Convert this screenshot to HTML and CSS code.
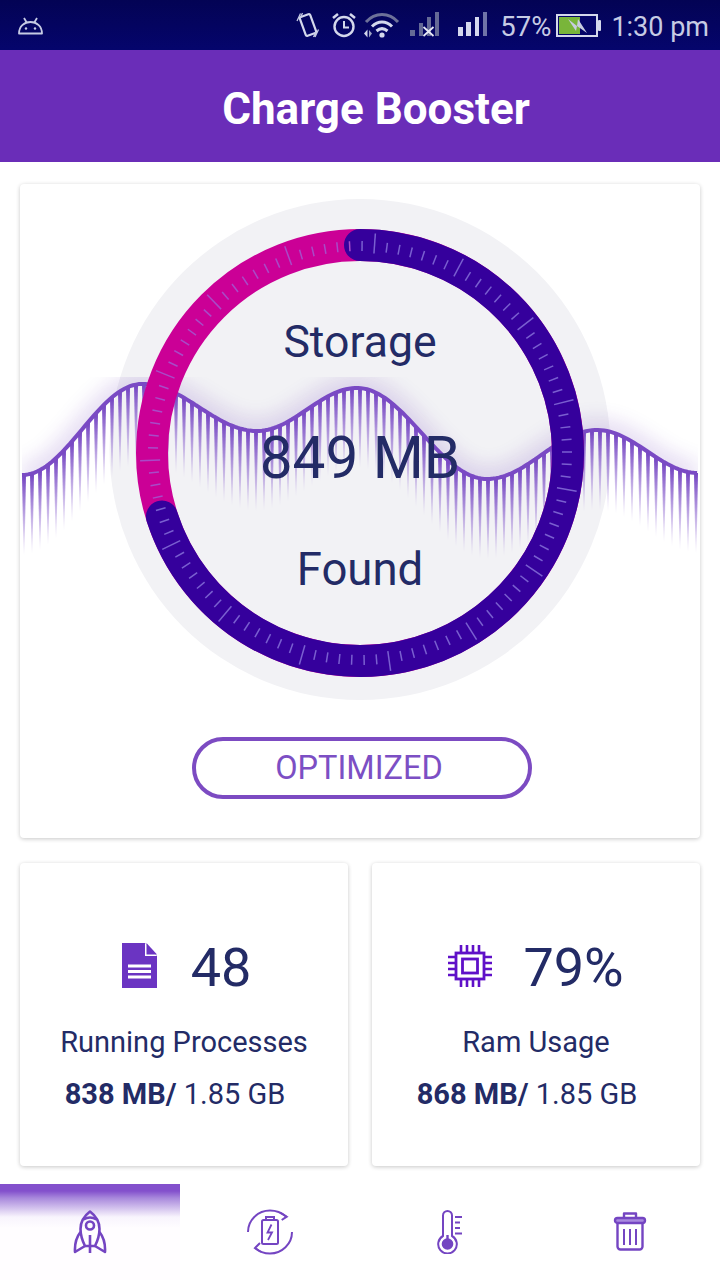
FILE: index.html
```html
<!DOCTYPE html>
<html lang="en">
<head>
<meta charset="utf-8">
<title>Charge Booster</title>
<link rel="stylesheet" href="styles.css">
</head>
<body>
<div class="screen">
  <div class="statusbar">
    <svg class="sb-android" viewBox="0 0 27 18" width="27" height="18"><path d="M2 16.500C2 9.500 7 5 13.500 5S25 9.500 25 16.500Z" fill="none" stroke="#c6cbe4" stroke-width="1.800" stroke-linejoin="round"/><path d="M7 1l3 5M20 1l-3 5" stroke="#c6cbe4" stroke-width="1.800" fill="none"/><circle cx="9" cy="11.500" r="1.200" fill="#c6cbe4"/><circle cx="18" cy="11.500" r="1.200" fill="#c6cbe4"/></svg>
    <div class="sb-right">
      <svg class="sb-vib" viewBox="0 0 24 26" width="24" height="26"><rect x="6.500" y="3" width="11" height="20" rx="1.500" transform="rotate(-20 12 13)" fill="none" stroke="#d4d8ec" stroke-width="2.200"/><path d="M4.500 1.500L1 9M6.500 1L4 6.500M19 25l3.500-7.500M17.500 25l2.500-5" stroke="#c6cbe4" stroke-width="1.300" fill="none"/></svg>
      <svg class="sb-alarm" viewBox="0 0 26 26" width="26" height="26"><circle cx="13" cy="14.500" r="9.500" fill="none" stroke="#d4d8ec" stroke-width="2.400"/><path d="M13 9v6.500h5" fill="none" stroke="#d4d8ec" stroke-width="2"/><path d="M2 6l5-4M24 6l-5-4" stroke="#d4d8ec" stroke-width="2.600" fill="none"/></svg>
      <svg class="sb-wifi" viewBox="0 0 36 26" width="36" height="26"><path d="M2 10C11 0 25 0 34 10" fill="none" stroke="#6d7199" stroke-width="3"/><path d="M8 14.500C14 8.500 22 8.500 28 14.500" fill="none" stroke="#d4d8ec" stroke-width="3"/><path d="M12.500 19C16 16 20 16 23.500 19" fill="none" stroke="#d4d8ec" stroke-width="3"/><circle cx="18" cy="23" r="2.600" fill="#d4d8ec"/><path d="M0 21.500l3.500-4v8Z" fill="#d4d8ec"/><path d="M5 18l3 3.500-3 4Z" fill="#9ea3c4"/></svg>
      <svg class="sb-sigx" viewBox="0 0 29 26" width="29" height="26"><rect x="0" y="18" width="5" height="6" fill="#656a96"/><rect x="9" y="11" width="4" height="13" fill="#656a96"/><rect x="17" y="5" width="4" height="19" fill="#656a96"/><rect x="25" y="0" width="4" height="24" fill="#656a96"/><path d="M13.500 15l10 9M23.500 15l-10 9" stroke="#e6e8f4" stroke-width="1.800"/></svg>
      <svg class="sb-sig" viewBox="0 0 29 26" width="29" height="26"><rect x="0" y="15" width="5" height="9" fill="#d5d8ee"/><rect x="8" y="10" width="5" height="14" fill="#d5d8ee"/><rect x="17" y="5" width="4" height="19" fill="#d5d8ee"/><rect x="25" y="0" width="4" height="24" fill="#6f74a8"/></svg>
      <span class="sb-pct">57%</span>
      <svg class="sb-batt" viewBox="0 0 45 23" width="45" height="23"><rect x="1" y="1" width="40" height="21" fill="#050568" stroke="#d4d8ec" stroke-width="2"/><rect x="3" y="3" width="21" height="17" fill="#79b53a"/><rect x="42" y="6" width="3" height="11" rx="1" fill="#d4d8ec"/><path d="M12 5l9 7 1-7 9 14-10-7-1 5Z" fill="#c8cce0"/></svg>
      <span class="sb-time">1:30 pm</span>
    </div>
  </div>

  <header class="appbar"><h1>Charge Booster</h1></header>

  <main class="content">
    <section class="card hero">
      <div class="gauge">
        <svg class="gauge-art" id="gauge" viewBox="20 184 680 520" width="680" height="520"></svg>
        <div class="gauge-text">
          <div class="g-storage">Storage</div>
          <div class="g-value">849 MB</div>
          <div class="g-found">Found</div>
        </div>
      </div>
      <div class="pill">OPTIMIZED</div>
    </section>

    <div class="stats">
      <section class="card stat">
        <div class="stat-top stat-top-doc">
          <svg class="stat-ico" viewBox="0 0 35 45" width="35" height="45"><path d="M0 0H23L35 13V45H0Z" fill="#6b34c2"/><path d="M23 0V13H35Z" fill="#fff"/><path d="M24.500 0L35 11.500H24.500Z" fill="#6b34c2"/><path d="M6 23H29M6 28.500H29M6 34H29" stroke="#fff" stroke-width="2.800"/></svg>
          <span class="stat-num">48</span>
        </div>
        <div class="stat-label">Running Processes</div>
        <div class="stat-mem"><b>838 MB/</b> 1.85 GB</div>
      </section>
      <section class="card stat">
        <div class="stat-top stat-top-chip">
          <svg class="stat-ico" viewBox="0 0 44 44" width="44" height="44"><rect x="8" y="9" width="28" height="26" fill="none" stroke="#5f10c8" stroke-width="2.800"/><rect x="14.500" y="15" width="15" height="14" fill="none" stroke="#5f10c8" stroke-width="2.800"/><path d="M13 1V9M19 1V9M25 1V9M31 1V9M13 35V43M19 35V43M25 35V43M31 35V43M0 13H8M0 19H8M0 25H8M0 31H8M36 13H44M36 19H44M36 25H44M36 31H44" stroke="#5f10c8" stroke-width="2.600" fill="none"/></svg>
          <span class="stat-num">79%</span>
        </div>
        <div class="stat-label">Ram Usage</div>
        <div class="stat-mem"><b>868 MB/</b> 1.85 GB</div>
      </section>
    </div>
  </main>

  <nav class="tabs">
    <div class="tab tab-active">
      <svg class="ti-rocket" viewBox="0 0 34 44" width="34" height="44" fill="none" stroke="#7445c2" stroke-width="2.600" stroke-linejoin="round"><path d="M17 1.500C11 6 7.500 12 7.500 19C7.500 25 9.500 31 12 36H22C24.500 31 26.500 25 26.500 19C26.500 12 23 6 17 1.500Z"/><path d="M10.500 9.500Q17 5.500 23.500 9.500"/><circle cx="17" cy="15.500" r="4"/><path d="M7.500 22C3.500 27 1.500 33 2 42L12 36"/><path d="M26.500 22C30.500 27 32.500 33 32 42L22 36"/><path d="M17 25V43"/></svg>
    </div>
    <div class="tab">
      <svg class="ti-batt" viewBox="0 0 46 46" width="46" height="46" fill="none" stroke="#7445c2" stroke-width="2"><path d="M1 23C1 11 11 1.500 23 1.500C29 1.500 35 4 39.500 7.700"/><path d="M33 3.700L39.700 7.700L34.700 11"/><path d="M45 23C45 35 35 44.500 23 44.500C17 44.500 12 42.500 8 39"/><path d="M13 34L8 39L14 43"/><rect x="15" y="11" width="16" height="24" rx="1.500"/><path d="M19 11V8H27V11"/><path d="M24.500 15.500L20.500 23.500H25L21 31" stroke-width="1.800"/></svg>
    </div>
    <div class="tab">
      <svg class="ti-thermo" viewBox="0 0 26 44" width="26" height="44" fill="none" stroke="#7445c2" stroke-width="2"><path d="M6 26V5.500A4.500 4.500 0 0 1 15 5.500V26A9.300 9.300 0 1 1 6 26Z"/><circle cx="10.500" cy="34" r="5.800" fill="#7445c2" stroke="none"/><path d="M10.500 25V32" stroke-width="2.400"/><path d="M18 7H25M18 12.500H23M18 18H23M18 23.500H25" stroke-width="2"/></svg>
    </div>
    <div class="tab">
      <svg class="ti-trash" viewBox="0 0 34 39" width="34" height="39" fill="none" stroke="#7445c2" stroke-width="2.400" stroke-linejoin="round"><path d="M11 6V1.500H23V6"/><rect x="2" y="6" width="30" height="5" rx="2.500" fill="#a98adf"/><path d="M4.500 11V34.500A3 3 0 0 0 7.500 37.500H26.500A3 3 0 0 0 29.500 34.500V11"/><path d="M11 17V33M17 17V33M23 17V33" stroke-width="2"/></svg>
    </div>
  </nav>
</div>
<script src="app.js"></script>
</body>
</html>
```

FILE: styles.css
```css
* { box-sizing: border-box; }
html, body { margin: 0; padding: 0; background: #fff; }
body { font-family: Roboto, "Liberation Sans", sans-serif; }
.screen { width: 720px; height: 1280px; display: flex; flex-direction: column; overflow: hidden; background: #fff; }

.statusbar { height: 50px; flex: none; display: flex; align-items: center; justify-content: space-between; padding: 0 11px 0 17px; background: linear-gradient(180deg, #030354, #05056c); color: #c6cbe4; }
.sb-android { margin-top: 2px; }
.sb-right { display: flex; align-items: center; }
.sb-vib { margin-right: 11px; }
.sb-alarm { margin-right: 7px; }
.sb-wifi { margin-right: 10px; }
.sb-sigx { margin-right: 19px; }
.sb-sig { margin-right: 13px; }
.sb-pct { font-size: 27.5px; line-height: 30px; margin-right: 5px; padding-top: 3px; }
.sb-batt { margin-right: 10px; }
.sb-time { font-size: 27px; line-height: 30px; padding-top: 3px; }

.appbar { height: 112px; flex: none; display: flex; align-items: center; justify-content: center; padding: 6px 0 0 32px; background: #6a2db8; }
.appbar h1 { margin: 0; color: #fff; font-size: 44px; line-height: 50px; font-weight: 700; }

.content { flex: none; padding: 22px 20px 0; display: flex; flex-direction: column; gap: 25px; }
.card { background: #fff; border-radius: 4px; box-shadow: 0 1px 4px rgba(0, 0, 0, .22); }
.hero { height: 654px; display: flex; flex-direction: column; align-items: center; }
.gauge { display: grid; width: 680px; height: 520px; }
.gauge-art, .gauge-text { grid-area: 1 / 1; }
.gauge-art { display: block; }
.gauge-text { display: flex; flex-direction: column; align-items: center; color: #232b66; padding-top: 130px; }
.g-storage { font-size: 44.6px; line-height: 56px; }
.g-value { font-size: 58.5px; line-height: 64px; margin-top: 56px; }
.g-found { font-size: 45.5px; line-height: 56px; margin-top: 52px; }
.pill { margin: 33px 0 0 3px; width: 340px; height: 62px; border: 4px solid #7c4bc2; border-radius: 31px; padding-right: 5px; display: flex; align-items: center; justify-content: center; font-size: 32.5px; color: #7c4fc4; }

.stats { display: flex; gap: 24px; }
.stat { width: 328px; height: 303px; display: flex; flex-direction: column; align-items: center; padding-top: 75px; color: #232b66; }
.stat-top { display: flex; align-items: center; height: 60px; }
.stat-top-doc { gap: 34px; margin-left: 5px; }
.stat-top-chip { gap: 31px; }
.stat-ico { margin-top: -5px; }
.stat-num { font-size: 54px; line-height: 60px; }
.stat-label { margin-top: 26px; font-size: 29px; line-height: 36px; }
.stat-mem { margin-top: 16px; padding-right: 18px; font-size: 29px; line-height: 36px; }
.stat-mem b { font-weight: 700; }

.tabs { margin-top: 18px; flex: 1; display: flex; }
.tab { width: 180px; display: flex; justify-content: center; align-items: flex-start; }
.tab-active { background: linear-gradient(180deg, #8350cc 0, #8350cc 7px, #a888dc 14px, #f8f4fd 33px, #fffdff 44px, #fffdff 100%); }
.ti-rocket { margin-top: 26px; }
.ti-batt { margin-top: 25px; }
.ti-thermo { margin-top: 26px; }
.ti-trash { margin-top: 28px; }
```

FILE: app.js
```js
(function () {
  var NS = 'http://www.w3.org/2000/svg';
  var svg = document.getElementById('gauge');
  var CX = 360, CY = 453, R = 208;

  function el(name, attrs, parent) {
    var n = document.createElementNS(NS, name);
    for (var k in attrs) n.setAttribute(k, attrs[k]);
    (parent || svg).appendChild(n);
    return n;
  }

  // wave extrema, in page coordinates
  var pts = [[22, 475], [142, 384], [257, 431], [357, 388], [487, 479], [597, 430], [698, 473]];
  function waveY(x) {
    for (var i = 0; i < pts.length - 1; i++) {
      if (x <= pts[i + 1][0]) {
        var t = (x - pts[i][0]) / (pts[i + 1][0] - pts[i][0]);
        return pts[i][1] + (pts[i + 1][1] - pts[i][1]) * (1 - Math.cos(Math.PI * t)) / 2;
      }
    }
    return pts[pts.length - 1][1];
  }
  var line = [];
  for (var x = 22; x <= 698; x += 3) line.push(x + ' ' + waveY(x).toFixed(1));
  var lineD = 'M' + line.join('L');

  var defs = el('defs', {});
  var grad = el('linearGradient', { id: 'fade', x1: 0, y1: 0, x2: 0, y2: 1 }, defs);
  el('stop', { offset: '0', 'stop-color': '#7444c2', 'stop-opacity': '1' }, grad);
  el('stop', { offset: '.4', 'stop-color': '#7a4cc6', 'stop-opacity': '.62' }, grad);
  el('stop', { offset: '1', 'stop-color': '#8a60d0', 'stop-opacity': '0' }, grad);
  var blur = el('filter', { id: 'glow', x: '-10%', y: '-100%', width: '120%', height: '300%' }, defs);
  el('feGaussianBlur', { stdDeviation: '11' }, blur);
  var clip = el('clipPath', { id: 'above' }, defs);
  el('path', { d: 'M22 377H698V' + waveY(698) + 'L' + line.slice().reverse().join('L') + 'Z' }, clip);

  el('circle', { cx: 360, cy: 449.5, r: 250.5, fill: '#f2f2f5' });

  // glow above the wave
  var g = el('g', { 'clip-path': 'url(#above)' });
  el('path', { d: lineD, fill: 'none', stroke: '#6a38b8', 'stroke-width': 14, opacity: '.28', filter: 'url(#glow)' }, g);

  // hanging bars
  for (var b = 24; b <= 696; b += 8) {
    var y = waveY(b);
    var h = 80;
    el('path', {
      d: 'M' + (b - 2) + ' ' + y + 'H' + (b + 2) + 'L' + (b + 0.5) + ' ' + (y + h) + 'H' + (b - 0.5) + 'Z',
      fill: 'url(#fade)'
    });
  }
  el('path', { d: lineD, fill: 'none', stroke: '#7a4ac4', 'stroke-width': 4 });

  // ring
  el('circle', { cx: CX, cy: CY, r: R, fill: 'none', stroke: '#cb0096', 'stroke-width': 32 });
  function pt(deg, r) {
    var a = deg * Math.PI / 180;
    return (CX + r * Math.cos(a)).toFixed(2) + ' ' + (CY + r * Math.sin(a)).toFixed(2);
  }
  el('path', {
    d: 'M' + pt(-90, R) + 'A' + R + ' ' + R + ' 0 1 1 ' + pt(162.2, R),
    fill: 'none', stroke: '#35009c', 'stroke-width': 32, 'stroke-linecap': 'round'
  });

  // ticks: a long one every 24 degrees, 7 intervals between them
  for (var i = 0; i < 105; i++) {
    var deg = 10 + i * 24 / 7;
    var long = i % 7 === 0;
    var onPink = (deg % 360) > 165 && (deg % 360) < 268;
    el('path', {
      d: 'M' + pt(deg, long ? 200 : 202) + 'L' + pt(deg, long ? 220 : 212),
      stroke: onPink ? '#a84bc8' : '#7a5fd0',
      'stroke-width': 1.5,
      fill: 'none'
    });
  }
})();
```
